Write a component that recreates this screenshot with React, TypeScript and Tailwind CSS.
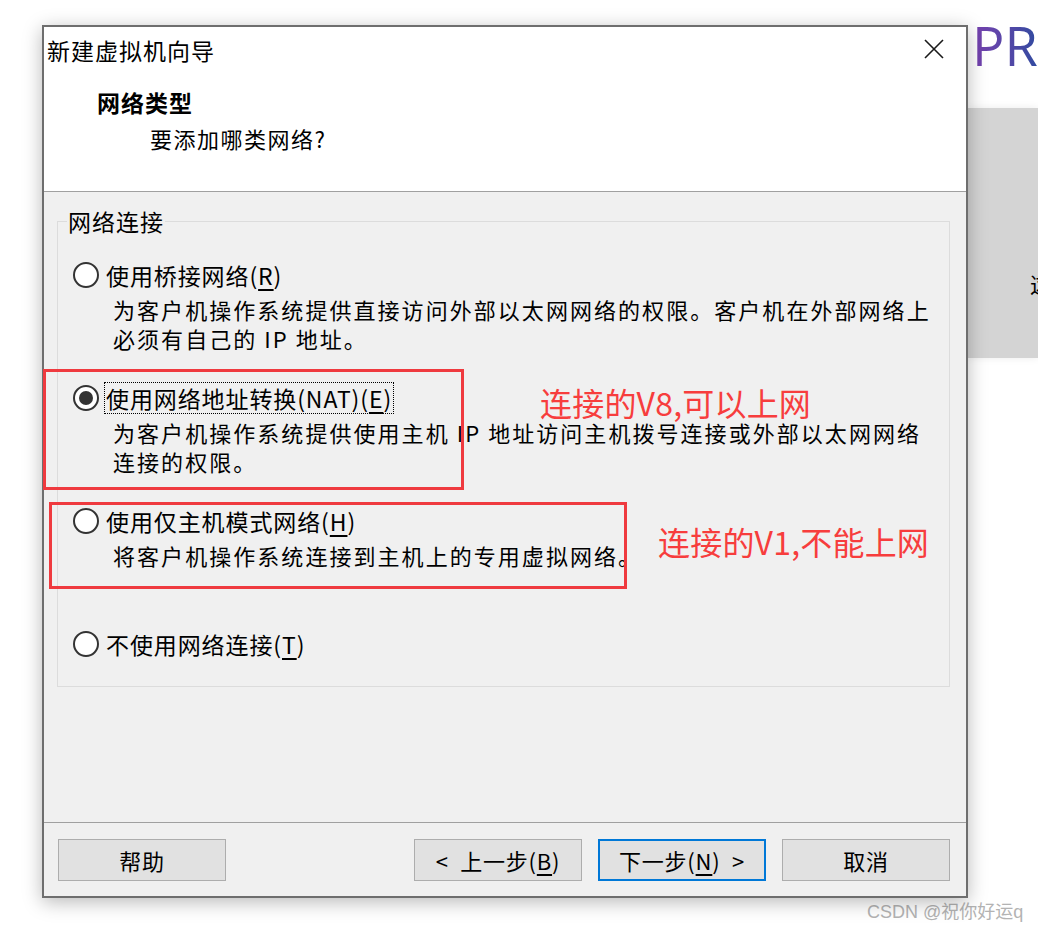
import React from "react";

const cjk = { fontFamily: '"Noto Sans CJK SC", "Noto Sans", sans-serif' };

function Radio({ checked }: { checked?: boolean }) {
  return (
    <span className="w-[26px] h-[26px] shrink-0 rounded-full border-2 border-[#333] bg-white flex items-center justify-center">
      {checked && <span className="w-[14px] h-[14px] rounded-full bg-[#333]" />}
    </span>
  );
}

type Option = {
  label: string;
  key: string;
  desc?: string[];
  checked?: boolean;
  focused?: boolean;
  gap: string;
};

const options: Option[] = [
  {
    label: "使用桥接网络",
    key: "R",
    desc: ["为客户机操作系统提供直接访问外部以太网网络的权限。客户机在外部网络上", "必须有自己的 IP 地址。"],
    gap: "mt-0",
  },
  {
    label: "使用网络地址转换(NAT)",
    key: "E",
    desc: ["为客户机操作系统提供使用主机 IP 地址访问主机拨号连接或外部以太网网络", "连接的权限。"],
    checked: true,
    focused: true,
    gap: "mt-[29px]",
  },
  {
    label: "使用仅主机模式网络",
    key: "H",
    desc: ["将客户机操作系统连接到主机上的专用虚拟网络。"],
    gap: "mt-[29px]",
  },
  {
    label: "不使用网络连接",
    key: "T",
    gap: "mt-[58px]",
  },
];

function Button({ children, primary }: { children: React.ReactNode; primary?: boolean }) {
  return (
    <button
      className={
        "w-[168px] h-[42px] bg-[#e1e1e1] text-[22px] tracking-[0.8px] text-black flex items-center justify-center " +
        (primary ? "border-2 border-[#0078d7]" : "border border-[#adadad]")
      }
    >
      {children}
    </button>
  );
}

export default function App() {
  return (
    <div className="relative w-[1038px] h-[931px] bg-white overflow-hidden flex" style={cjk}>
      {/* dialog */}
      <div className="mt-[25px] ml-[42px] w-[926px] h-[873px] shrink-0 border-2 border-[#6e6e6e] bg-[#f0f0f0] flex flex-col shadow-[0_4px_18px_rgba(0,0,0,0.28)] relative z-10">
        <div className="h-[165px] bg-white border-b border-[#a0a0a0] relative">
          <div className="pl-[3px] pt-[7px] h-[39px] text-[23px] leading-[32px] tracking-[1px] text-black">新建虚拟机向导</div>
          <svg className="absolute right-[22px] top-[12px]" width="20" height="20" viewBox="0 0 20 20">
            <path d="M1 1 L19 19 M19 1 L1 19" stroke="#1a1a1a" strokeWidth="1.6" />
          </svg>
          <div className="pl-[53px] mt-[20px] text-[23px] leading-[32px] font-bold tracking-[1px] text-black">网络类型</div>
          <div className="pl-[106px] mt-[4px] text-[22px] leading-[32px] tracking-[1.5px] text-black">要添加哪类网络?</div>
        </div>

        <div className="flex-1 pt-[14px] pl-[13px] pr-[16px]">
          <fieldset className="border border-[#dcdcdc] pb-[26px]">
            <legend className="ml-[9px] px-[1px] text-[23px] leading-[30px] tracking-[1px] text-black">网络连接</legend>
            <div className="pt-[23px] pl-[15px] flex flex-col">
              {options.map((o) => (
                <div key={o.key} className={o.gap}>
                  <div className="h-[32px] flex items-center gap-[6px]">
                    <Radio checked={o.checked} />
                    <span
                      className={
                        "text-[23px] leading-[30px] tracking-[0.9px] text-black px-[1px] " +
                        (o.focused ? "outline outline-1 outline-dotted outline-black" : "")
                      }
                    >
                      {o.label}(<span className="underline underline-offset-4">{o.key}</span>)
                    </span>
                  </div>
                  {o.desc && (
                    <div className="mt-[4px] pl-[40px] text-[22px] leading-[29px] tracking-[2.05px] text-black">
                      {o.desc.map((d) => (
                        <div key={d}>{d}</div>
                      ))}
                    </div>
                  )}
                </div>
              ))}
            </div>
          </fieldset>
        </div>

        <div className="h-[74px] border-t border-[#a0a0a0] pt-[16px] pl-[14px] pr-[16px] flex">
          <Button>帮助</Button>
          <div className="ml-auto flex gap-[16px]">
            <Button>
              &lt;&nbsp;&nbsp;上一步(<span className="underline underline-offset-4">B</span>)
            </Button>
            <Button primary>
              下一步(<span className="underline underline-offset-4">N</span>)&nbsp;&nbsp;&gt;
            </Button>
            <Button>取消</Button>
          </div>
        </div>
      </div>

      {/* background application behind the dialog */}
      <div className="flex-1 flex flex-col overflow-hidden">
        <div
          className="h-[108px] pl-[4px] pt-[15px] text-[54px] leading-[60px] bg-gradient-to-r from-[#7b3fb0] to-[#2f4aa0] bg-clip-text text-transparent"
          style={{ fontFamily: '"Open Sans", sans-serif' }}
        >
          PR
        </div>
        <div className="h-[250px] bg-[#d4d4d4] shadow-[0_0_8px_rgba(0,0,0,0.08)] pt-[160px] pl-[62px] text-[22px] leading-[30px] whitespace-nowrap text-black">
          这
        </div>
      </div>

      {/* annotations */}
      <div className="absolute left-[43px] top-[369px] w-[421px] h-[121px] border-[3px] border-[#ef3a3f] z-20" />
      <div className="absolute left-[49px] top-[502px] w-[578px] h-[87px] border-[3px] border-[#ef3a3f] z-20" />
      <div className="absolute left-[540px] top-[386px] text-[32px] leading-[32px] tracking-[0.2px] text-[#f73d3d] z-20">连接的V8,可以上网</div>
      <div className="absolute left-[658px] top-[525px] text-[32px] leading-[32px] tracking-[0.2px] text-[#f73d3d] z-20">连接的V1,不能上网</div>

      <div
        className="absolute left-[867px] top-[900px] text-[18px] leading-[24px] text-[#b3b3b3]"
        style={{ fontFamily: '"Liberation Sans", "Noto Sans CJK SC", sans-serif' }}
      >
        CSDN @祝你好运q
      </div>
    </div>
  );
}
